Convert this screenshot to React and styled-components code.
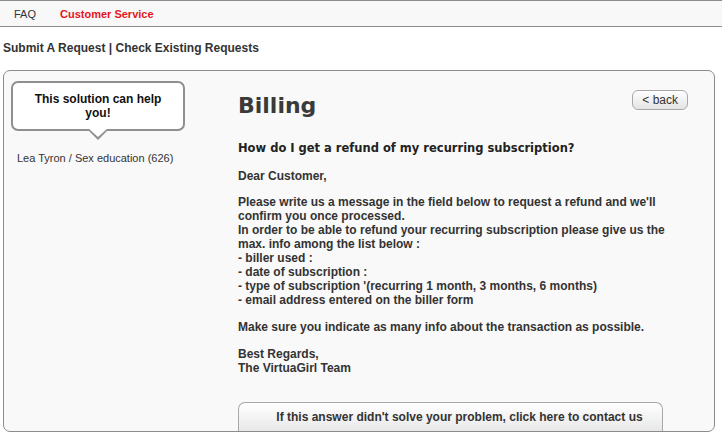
import React from 'react';
import styled, { createGlobalStyle } from 'styled-components';

const GlobalStyle = createGlobalStyle`
  body {
    margin: 0;
    background: #fff;
    font-family: "Liberation Sans", Arial, sans-serif;
    color: #333;
  }
`;

const Page = styled.div`
  width: 725px;
  height: 434px;
  overflow: hidden;
`;

const NavBar = styled.nav`
  width: 722px;
  height: 27px;
  display: flex;
  align-items: center;
  gap: 24px;
  padding-left: 14px;
  box-sizing: border-box;
  background: #f8f8f8;
  border-top: 1px solid #8c8c8c;
  border-bottom: 1px solid #8c8c8c;
  font-size: 11px;
`;

const NavLink = styled.a`
  color: ${props => (props.active ? '#e3161b' : '#333')};
  font-weight: ${props => (props.active ? 'bold' : 'normal')};
  text-decoration: none;
`;

const SubLinks = styled.div`
  margin: 13px 0 0 3px;
  font-size: 12px;
  font-weight: bold;
  color: #333;
  line-height: 16px;
`;

const Panel = styled.div`
  margin: 14px 0 0 3px;
  width: 712px;
  height: 362px;
  box-sizing: border-box;
  border: 1px solid #8c8c8c;
  border-radius: 7px;
  background: #f9f9f9;
  display: flex;
  padding: 10px 0 0 7px;
`;

const Sidebar = styled.div`
  width: 227px;
  flex-shrink: 0;
`;

const Bubble = styled.div`
  position: relative;
  width: 174px;
  height: 50px;
  box-sizing: border-box;
  border: 2px solid #8f8f8f;
  border-radius: 7px;
  background: #fff;
  display: flex;
  align-items: center;
  justify-content: center;
  text-align: center;
  font-size: 12px;
  font-weight: bold;
  color: #111;
  line-height: 14px;
  padding: 0 20px;

  &::after,
  &::before {
    content: '';
    position: absolute;
    left: 50%;
    transform: translateX(-50%);
    width: 0;
    height: 0;
    border-left: 10px solid transparent;
    border-right: 10px solid transparent;
  }
  &::before {
    bottom: -11px;
    border-top: 10px solid #8f8f8f;
  }
  &::after {
    bottom: -8px;
    border-top: 9px solid #fff;
  }
`;

const Author = styled.div`
  margin: 21px 0 0 6px;
  font-size: 11px;
  color: #333;
`;

const Content = styled.div`
  flex: 1;
  padding-right: 26px;
  font-size: 12px;
  font-weight: bold;
  color: #333;
  line-height: 14px;
  display: flex;
  flex-direction: column;
`;

const HeaderRow = styled.div`
  display: flex;
  justify-content: space-between;
  align-items: flex-start;
`;

const Title = styled.h1`
  margin: 12px 0 0;
  font-family: "DejaVu Sans", sans-serif;
  font-size: 22px;
  font-weight: bold;
  color: #3a3a3a;
  line-height: 26px;
`;

const BackButton = styled.button`
  margin-top: 9px;
  height: 20px;
  padding: 0 9px;
  border: 1px solid #a8a8a8;
  border-radius: 6px;
  background: linear-gradient(#ffffff, #e4e4e4);
  font-family: "Liberation Sans", Arial, sans-serif;
  font-size: 12px;
  color: #333;
  line-height: 16px;
`;

const Question = styled.h2`
  margin: 22px 0 0;
  font-family: "DejaVu Sans", sans-serif;
  font-size: 11.5px;
  font-weight: bold;
  color: #222;
  line-height: 14px;
`;

const Para = styled.p`
  margin: ${props => props.gap || 13}px 0 0;
`;

const ContactButton = styled.button`
  margin-top: auto;
  width: 425px;
  height: 29px;
  padding-left: 24px;
  border: 1px solid #a8a8a8;
  border-bottom: none;
  border-radius: 7px 7px 0 0;
  background: linear-gradient(#ffffff, #e8e8e8);
  font-family: "Liberation Sans", Arial, sans-serif;
  font-size: 12px;
  font-weight: bold;
  color: #333;
`;

export default function App() {
  return (
    <Page>
      <GlobalStyle />
      <NavBar>
        <NavLink>FAQ</NavLink>
        <NavLink active>Customer Service</NavLink>
      </NavBar>
      <SubLinks>Submit A Request | Check Existing Requests</SubLinks>
      <Panel>
        <Sidebar>
          <Bubble>This solution can help you!</Bubble>
          <Author>Lea Tyron / Sex education (626)</Author>
        </Sidebar>
        <Content>
          <HeaderRow>
            <Title>Billing</Title>
            <BackButton>&lt; back</BackButton>
          </HeaderRow>
          <Question>How do I get a refund of my recurring subscription?</Question>
          <Para gap={14}>Dear Customer,</Para>
          <Para gap={12}>
            Please write us a message in the field below to request a refund and we'll confirm you once processed.
            <br />
            In order to be able to refund your recurring subscription please give us the max. info among the list below :
            <br />- biller used :
            <br />- date of subscription :
            <br />- type of subscription '(recurring 1 month, 3 months, 6 months)
            <br />- email address entered on the biller form
          </Para>
          <Para>Make sure you indicate as many info about the transaction as possible.</Para>
          <Para>
            Best Regards,
            <br />
            The VirtuaGirl Team
          </Para>
          <ContactButton>If this answer didn't solve your problem, click here to contact us</ContactButton>
        </Content>
      </Panel>
    </Page>
  );
}
